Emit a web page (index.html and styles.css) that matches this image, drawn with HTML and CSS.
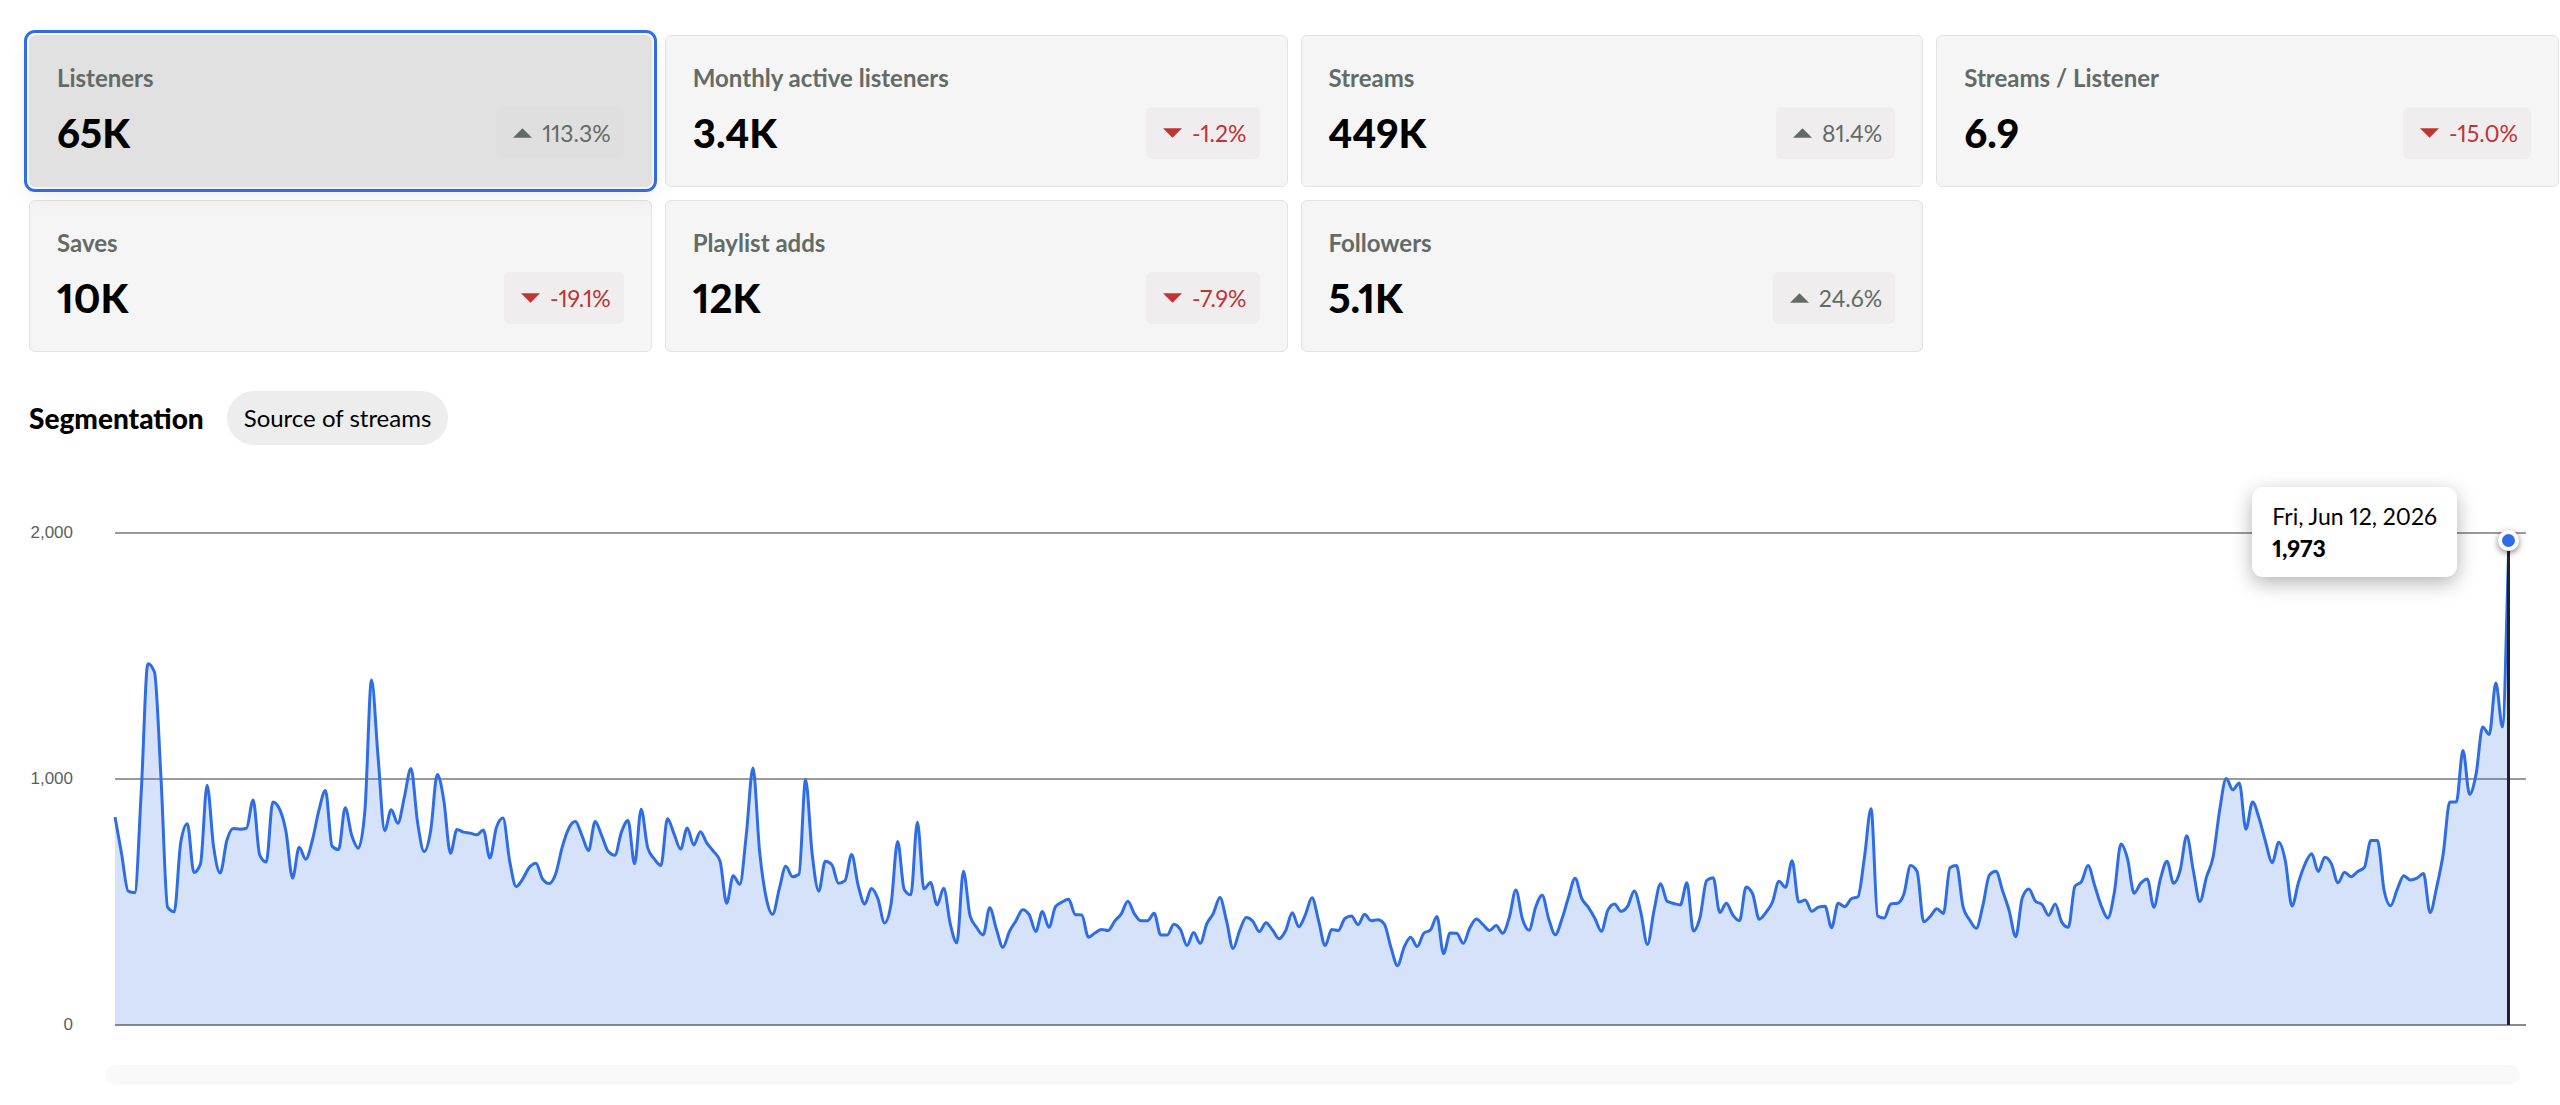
FILE: index.html
```html
<!DOCTYPE html>
<html lang="en">
<head>
<meta charset="utf-8">
<meta name="viewport" content="width=device-width, initial-scale=1">
<title>Audience stats</title>
<link rel="stylesheet" href="styles.css">
</head>
<body>
<main class="page">
  <section class="tiles" aria-label="Metrics">
    <button type="button" class="tile tile-selected" aria-pressed="true">
      <span class="tile-label">Listeners</span>
      <span class="tile-row"><span class="tile-value">65K</span><span class="badge"><svg class="arrow" viewBox="0 0 20 10" aria-hidden="true"><path d="M10 0 20 10H0Z"/></svg>113.3%</span></span>
    </button>
    <button type="button" class="tile" aria-pressed="false">
      <span class="tile-label">Monthly active listeners</span>
      <span class="tile-row"><span class="tile-value">3.4K</span><span class="badge badge-down"><svg class="arrow" viewBox="0 0 20 10" aria-hidden="true"><path d="M0 0H20L10 10Z"/></svg>-1.2%</span></span>
    </button>
    <button type="button" class="tile" aria-pressed="false">
      <span class="tile-label">Streams</span>
      <span class="tile-row"><span class="tile-value">449K</span><span class="badge"><svg class="arrow" viewBox="0 0 20 10" aria-hidden="true"><path d="M10 0 20 10H0Z"/></svg>81.4%</span></span>
    </button>
    <button type="button" class="tile" aria-pressed="false">
      <span class="tile-label">Streams / Listener</span>
      <span class="tile-row"><span class="tile-value">6.9</span><span class="badge badge-down"><svg class="arrow" viewBox="0 0 20 10" aria-hidden="true"><path d="M0 0H20L10 10Z"/></svg>-15.0%</span></span>
    </button>
    <button type="button" class="tile" aria-pressed="false">
      <span class="tile-label">Saves</span>
      <span class="tile-row"><span class="tile-value">10K</span><span class="badge badge-down"><svg class="arrow" viewBox="0 0 20 10" aria-hidden="true"><path d="M0 0H20L10 10Z"/></svg>-19.1%</span></span>
    </button>
    <button type="button" class="tile" aria-pressed="false">
      <span class="tile-label">Playlist adds</span>
      <span class="tile-row"><span class="tile-value">12K</span><span class="badge badge-down"><svg class="arrow" viewBox="0 0 20 10" aria-hidden="true"><path d="M0 0H20L10 10Z"/></svg>-7.9%</span></span>
    </button>
    <button type="button" class="tile" aria-pressed="false">
      <span class="tile-label">Followers</span>
      <span class="tile-row"><span class="tile-value">5.1K</span><span class="badge"><svg class="arrow" viewBox="0 0 20 10" aria-hidden="true"><path d="M10 0 20 10H0Z"/></svg>24.6%</span></span>
    </button>
  </section>

  <section class="segmentation">
    <h2 class="segmentation-title">Segmentation</h2>
    <button type="button" class="pill">Source of streams</button>
  </section>

  <section class="chart" aria-label="Listeners per day">
    <div class="axis">
      <span class="tick">2,000</span>
      <span class="tick">1,000</span>
      <span class="tick">0</span>
    </div>
    <div class="plot">
      <div class="grid"></div>
      <div class="series">
        <svg class="curve" id="curve" aria-hidden="true">
          <path class="curve-area" id="area"></path>
          <path class="curve-line" id="line"></path>
        </svg>
        <div class="cursor"><span class="dot"></span></div>
        <div class="tooltip">
          <span>Fri, Jun 12, 2026</span>
          <strong>1,973</strong>
        </div>
      </div>
    </div>
  </section>
  <div class="range"></div>
</main>
<script src="chart.js"></script>
</body>
</html>
```
FILE: styles.css
```css
* {
  box-sizing: border-box;
}

body {
  margin: 0;
  background: #fff;
  color: #000;
  font-family: Lato, "Liberation Sans", sans-serif;
  font-size: 24px;
  line-height: 30px;
}

button {
  font: inherit;
  color: inherit;
  cursor: pointer;
}

.page {
  padding: 35px 1px 20px 29px;
}

/* Metric tiles */
.tiles {
  display: grid;
  grid-template-columns: repeat(4, minmax(0, 1fr));
  gap: 13px;
}

.tile {
  display: flex;
  flex-direction: column;
  gap: 14px;
  padding: 27px;
  border: 1px solid #e3e3e3;
  border-radius: 6px;
  background: #f5f5f5;
  text-align: left;
}

/* The selected tile's shadow falls over the tile below it */
.tile-selected {
  position: relative;
  z-index: 1;
  border-color: #e1e1e1;
  background: #e1e1e1;
  outline: 3px solid #2e6de6;
  outline-offset: 2px;
  box-shadow: 0 8px 24px rgba(0, 0, 0, 0.08);
}

.tile-label {
  color: #636b66;
  font-weight: 700;
}

.tile-row {
  display: flex;
  align-items: center;
  justify-content: space-between;
}

.tile-value {
  font-size: 40px;
  font-weight: 900;
  font-variant-numeric: proportional-nums;
}

.badge {
  display: flex;
  align-items: center;
  gap: 10px;
  height: 52px;
  padding: 0 13px 0 17px;
  border-radius: 6px;
  background: #efeded;
  color: #636b66;
  font-size: 23px;
  font-variant-numeric: proportional-nums;
}

.tile-selected .badge {
  background: #dfdfdf;
}

.badge-down {
  color: #c03434;
}

.arrow {
  width: 19px;
  height: 10px;
  fill: currentColor;
}

/* Segmentation */
.segmentation {
  display: flex;
  align-items: center;
  gap: 23px;
  margin-top: 39px;
}

.segmentation-title {
  margin: 0;
  font-size: 28px;
  font-weight: 900;
}

.pill {
  height: 54px;
  padding: 0 17px;
  border: 0;
  border-radius: 27px;
  background: #eeeded;
}

/* Chart */
.chart {
  display: grid;
  grid-template-columns: 44px minmax(0, 1fr);
  gap: 42px;
  margin: 78px 33px 0 0;
}

.axis {
  display: flex;
  flex-direction: column;
  justify-content: space-between;
  height: 512px;
  color: #5c5f5d;
  font: 17px/20px "Liberation Sans", Arial, sans-serif;
  text-align: right;
}

.plot {
  position: relative;
  height: 492px;
  margin-top: 10px;
  padding-right: 17px;
}

.grid {
  position: absolute;
  inset: -1px 0;
  border-top: 2px solid #9a9a9a;
  border-bottom: 2px solid #8a8a8a;
  background: linear-gradient(#9a9a9a, #9a9a9a) center / 100% 2px no-repeat;
}

.series {
  position: relative;
  height: 100%;
}

.curve {
  display: block;
  width: 100%;
  height: 100%;
  overflow: visible;
}

.curve-area {
  fill: #2e6de6;
  fill-opacity: 0.2;
}

.curve-line {
  fill: none;
  stroke: #2e6de6;
  stroke-width: 3;
  stroke-linejoin: round;
}

.cursor {
  position: absolute;
  top: 7px;
  right: -1px;
  bottom: 0;
  width: 3px;
  background: #222;
}

.dot {
  position: absolute;
  top: -10px;
  left: -9px;
  width: 21px;
  height: 21px;
  border: 4px solid #fff;
  border-radius: 50%;
  background: #2e6de6;
  box-shadow: 0 2px 6px rgba(0, 0, 0, 0.5);
}

.tooltip {
  position: absolute;
  top: -46px;
  right: 52px;
  display: flex;
  flex-direction: column;
  padding: 13px 20px;
  border-radius: 11px;
  background: #fff;
  box-shadow: 0 6px 20px rgba(0, 0, 0, 0.3);
  font-size: 23px;
  line-height: 32px;
  white-space: nowrap;
  font-variant-numeric: proportional-nums;
}

.tooltip strong {
  font-weight: 900;
}

.range {
  height: 20px;
  margin: 30px 39px 0 76px;
  border-radius: 10px;
  background: #f9f9f9;
}
```
FILE: chart.js
```js
// Listeners per day over the last year.
const values = [
  845, 696, 544, 538, 953, 1469, 1435, 1001, 479, 460,
  743, 818, 620, 655, 975, 723, 618, 750, 799, 796,
  800, 915, 692, 663, 907, 879, 786, 597, 723, 674,
  750, 872, 953, 727, 713, 883, 770, 719, 872, 1402,
  1089, 790, 875, 820, 926, 1043, 824, 705, 790, 1018,
  913, 698, 795, 784, 780, 773, 793, 679, 804, 841,
  668, 563, 594, 641, 658, 594, 575, 614, 723, 800,
  827, 770, 709, 827, 770, 705, 690, 784, 831, 655,
  877, 720, 675, 648, 838, 777, 715, 801, 732, 786,
  739, 706, 666, 495, 607, 572, 777, 1045, 709, 519,
  450, 553, 645, 603, 613, 998, 696, 544, 666, 651,
  576, 587, 693, 567, 492, 555, 513, 415, 492, 746,
  551, 529, 824, 553, 579, 488, 556, 411, 334, 625,
  445, 397, 366, 477, 391, 316, 380, 424, 469, 449,
  380, 461, 397, 481, 500, 511, 449, 447, 357, 374,
  388, 384, 422, 452, 503, 452, 424, 424, 454, 366,
  366, 410, 388, 323, 376, 332, 411, 454, 518, 424,
  311, 384, 437, 422, 380, 416, 386, 351, 384, 456,
  399, 449, 517, 424, 323, 388, 384, 433, 443, 408,
  450, 424, 428, 410, 316, 241, 316, 357, 319, 373,
  386, 441, 290, 374, 373, 332, 395, 431, 408, 384,
  404, 373, 438, 549, 431, 385, 479, 527, 431, 367,
  431, 519, 597, 515, 479, 434, 381, 468, 492, 462,
  483, 545, 458, 327, 465, 574, 503, 494, 488, 578,
  382, 438, 587, 599, 457, 495, 447, 424, 561, 533,
  430, 457, 499, 584, 560, 668, 500, 508, 462, 479,
  483, 395, 495, 481, 513, 521, 682, 879, 443, 435,
  492, 495, 533, 648, 624, 420, 441, 473, 453, 639,
  648, 479, 427, 393, 485, 610, 625, 546, 465, 359,
  517, 553, 503, 490, 446, 492, 418, 397, 564, 583,
  648, 567, 485, 435, 540, 736, 675, 536, 576, 594,
  479, 594, 666, 576, 628, 769, 628, 502, 601, 682,
  872, 1002, 956, 984, 796, 906, 841, 743, 660, 743,
  666, 484, 580, 655, 696, 624, 682, 655, 578, 621,
  603, 624, 640, 750, 750, 549, 485, 551, 607, 589,
  597, 616, 457, 560, 696, 907, 907, 1116, 938, 1021,
  1211, 1181, 1390, 1212, 1973
];
const MAX = 2000;

// Monotone cubic interpolation: the curve never overshoots a data point.
function curvePath(points) {
  const n = points.length;
  const h = points[1][0] - points[0][0];
  const slope = [];
  for (let i = 0; i < n - 1; i++) slope.push((points[i + 1][1] - points[i][1]) / h);
  const tangent = [slope[0]];
  for (let i = 1; i < n - 1; i++) {
    const a = slope[i - 1];
    const b = slope[i];
    tangent.push(a * b <= 0 ? 0 : Math.sign(a) * Math.min(Math.abs(a), Math.abs(b), Math.abs(a + b) / 4) * 2);
  }
  tangent.push(slope[n - 2]);
  let d = `M${points[0][0]},${points[0][1]}`;
  for (let i = 1; i < n; i++) {
    const [x0, y0] = points[i - 1];
    const [x1, y1] = points[i];
    d += `C${x0 + h / 3},${y0 + tangent[i - 1] * h / 3},${x1 - h / 3},${y1 - tangent[i] * h / 3},${x1},${y1}`;
  }
  return d;
}

function draw() {
  const { width, height } = document.getElementById("curve").getBoundingClientRect();
  const points = values.map((v, i) => [width * i / (values.length - 1), height * (1 - v / MAX)]);
  const d = curvePath(points);
  document.getElementById("line").setAttribute("d", d);
  document.getElementById("area").setAttribute("d", `${d}V${height}H0Z`);
}

draw();
window.addEventListener("resize", draw);
```
